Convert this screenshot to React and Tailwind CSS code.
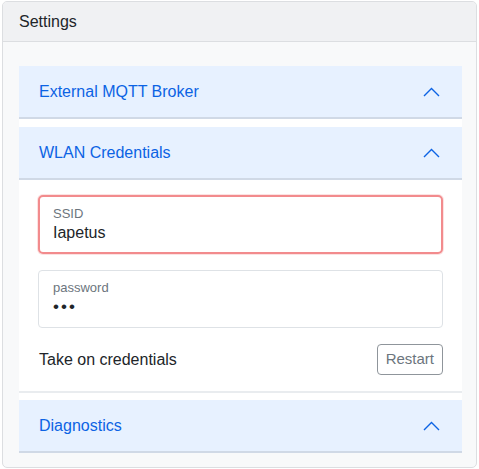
const Chevron = () => (
  <svg width="17" height="10" viewBox="0 0 17 10" fill="none" className="shrink-0">
    <polyline points="1,9 8.5,1.5 16,9" stroke="#0c63e4" strokeWidth="1.4" />
  </svg>
);

const AccordionHeader = ({ title }) => (
  <div className="flex h-[53px] items-center justify-between border-b-2 border-[#d0d9e6] bg-[#e7f1ff] pl-5 pr-[22px]">
    <span className="text-[16px] text-[#0c63e4]">{title}</span>
    <Chevron />
  </div>
);

const FloatingInput = ({ label, value, invalid, secret }) => (
  <div
    className={
      invalid
        ? "flex h-[59px] flex-col justify-center rounded-[5px] border-2 border-[#f28b8d] bg-white pl-[13px] shadow-[0_0_0_1px_rgba(242,139,141,0.25)]"
        : "flex h-[58px] flex-col justify-center rounded-[4px] border border-[#dee2e6] bg-white pl-[14px]"
    }
  >
    <span className="text-[13px] leading-[16px] text-[#6c757d]">{label}</span>
    <span
      className={
        secret
          ? "text-[17px] leading-[22px] tracking-[2px] text-[#212529]"
          : "text-[16px] leading-[22px] text-[#212529]"
      }
    >
      {value}
    </span>
  </div>
);

export default function App() {
  return (
    <div className="pl-[2px] pt-[1px]" style={{ fontFamily: '"Liberation Sans", Arial, sans-serif' }}>
      <div className="w-[475px] overflow-hidden rounded-[5px] border border-[#dcdee1] bg-[#f8f9fa]">
        {/* Card header */}
        <div className="flex h-[40px] items-center border-b border-[#dcdee1] bg-[#f0f1f3] px-4 text-[16px] text-[#212529]">
          Settings
        </div>

        {/* Card body */}
        <div className="pb-[14px] pl-4 pr-[14px] pt-6">
          <div className="bg-white">
            <AccordionHeader title="External MQTT Broker" />
            <div className="h-2" />

            <AccordionHeader title="WLAN Credentials" />
            <div className="flex flex-col gap-4 px-[19px] pb-4 pt-[15px]">
              <FloatingInput label="SSID" value="Iapetus" invalid />
              <FloatingInput label="password" value="•••" secret />
              <div className="flex items-center justify-between pl-px">
                <span className="text-[16px] text-[#212529]">Take on credentials</span>
                <button className="h-[31px] rounded-[4px] border border-[#8f959b] bg-white px-[8px] text-[15px] text-[#6c757d]">
                  Restart
                </button>
              </div>
            </div>
            <div className="h-[2px] bg-[#e9ecef]" />
            <div className="h-[7px]" />

            <AccordionHeader title="Diagnostics" />
          </div>
        </div>
      </div>
    </div>
  );
}
